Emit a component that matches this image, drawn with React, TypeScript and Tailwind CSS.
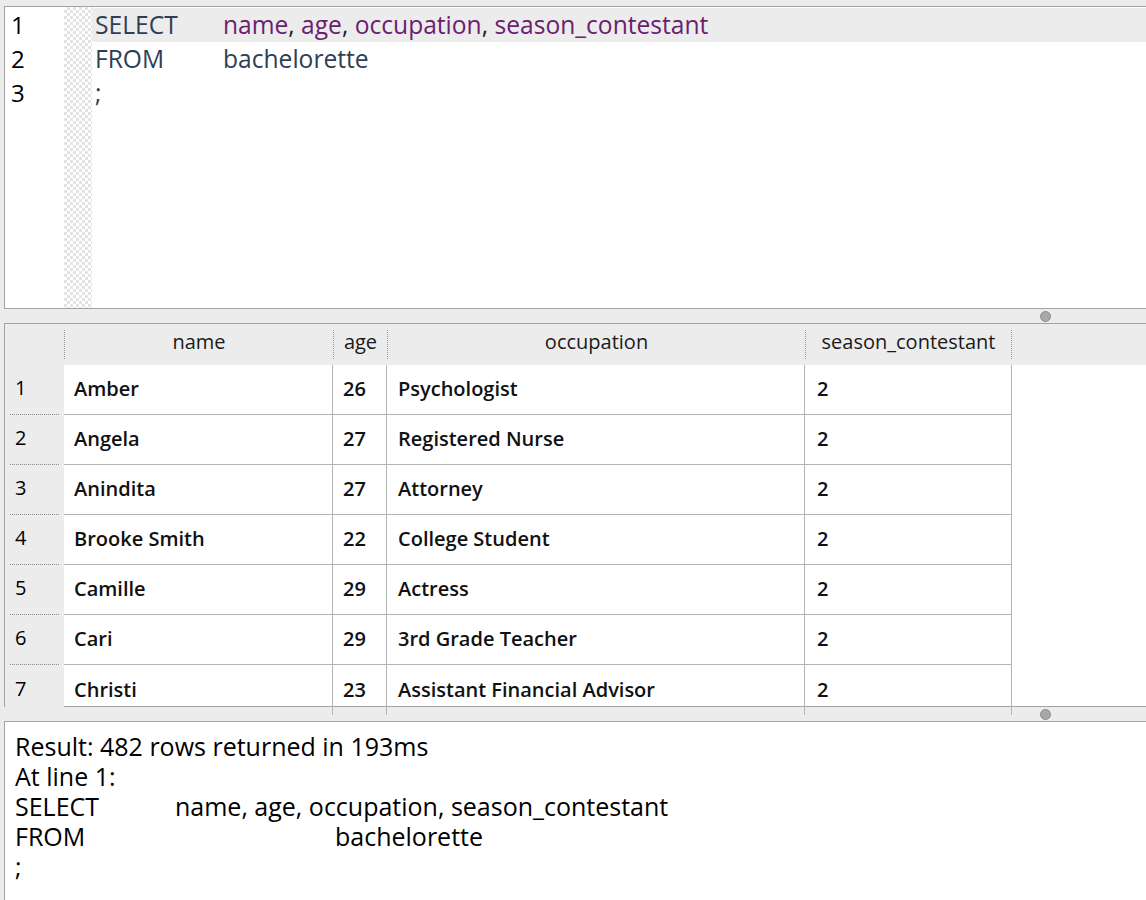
import React from "react";

const rows = [
  ["1", "Amber", "26", "Psychologist", "2"],
  ["2", "Angela", "27", "Registered Nurse", "2"],
  ["3", "Anindita", "27", "Attorney", "2"],
  ["4", "Brooke Smith", "22", "College Student", "2"],
  ["5", "Camille", "29", "Actress", "2"],
  ["6", "Cari", "29", "3rd Grade Teacher", "2"],
  ["7", "Christi", "23", "Assistant Financial Advisor", "2"],
];

const font = { fontFamily: "'Open Sans', 'Noto Sans', sans-serif" };

function Handle() {
  return (
    <div className="w-[11px] h-[11px] rounded-full bg-[#a8a8a8] border border-[#8c8c8c]" />
  );
}

export default function App() {
  return (
    <div
      className="w-[1146px] h-[900px] bg-[#ececec] flex flex-col overflow-hidden text-black"
      style={font}
    >
      <div className="h-[6px] shrink-0" />
      {/* Editor */}
      <div className="ml-[4px] h-[303px] shrink-0 border-t border-l border-b border-[#a3a3a3] bg-white flex">
        <div className="w-[59px] shrink-0 flex flex-col pt-[1px]">
          {["1", "2", "3"].map((n) => (
            <div key={n} className="h-[34px] pl-[6px] flex items-center text-[24px] leading-none font-medium text-black">
              {n}
            </div>
          ))}
        </div>
        <div className="w-[28px] shrink-0 bg-[repeating-conic-gradient(#e4e4e4_0_25%,#ffffff_0_50%)] bg-size-[6px_6px]" />
        <div className="flex-1 flex flex-col pt-[1px] text-[24.6px] leading-none font-medium">
          <div className="h-[34px] bg-[#ececec] flex items-center pl-[3px]">
            <span className="w-[128px] text-[#2e3e55]">SELECT</span>
            <span className="text-[#6b2170]">name</span>
            <span className="text-[#222]">,&nbsp;</span>
            <span className="text-[#6b2170]">age</span>
            <span className="text-[#222]">,&nbsp;</span>
            <span className="text-[#6b2170]">occupation</span>
            <span className="text-[#222]">,&nbsp;</span>
            <span className="text-[#6b2170]">season_contestant</span>
          </div>
          <div className="h-[34px] flex items-center pl-[3px]">
            <span className="w-[128px] text-[#2e3e55]">FROM</span>
            <span className="text-[#2e3e55]">bachelorette</span>
          </div>
          <div className="h-[34px] flex items-center pl-[3px]">
            <span className="text-[#2e3e55]">;</span>
          </div>
        </div>
      </div>
      {/* Splitter */}
      <div className="h-[14px] shrink-0 flex items-center justify-end pr-[95px]">
        <Handle />
      </div>
      {/* Table */}
      <div className="ml-[4px] h-[384px] shrink-0 border-t border-l border-b border-[#a3a3a3] bg-white flex flex-col">
        <div className="h-[41px] shrink-0 bg-[#ececec] flex text-[20px] leading-none text-[#1a1a1a]">
          <div className="w-[59px] shrink-0" />
          <div className="w-[269px] shrink-0 flex items-center justify-center pb-[5px] border-l border-dotted border-[#9a9a9a] my-[6px]">name</div>
          <div className="w-[54px] shrink-0 flex items-center justify-center pb-[5px] border-l border-dotted border-[#9a9a9a] my-[6px]">age</div>
          <div className="w-[418px] shrink-0 flex items-center justify-center pb-[5px] border-l border-dotted border-[#9a9a9a] my-[6px]">occupation</div>
          <div className="w-[207px] shrink-0 flex items-center justify-center pb-[5px] border-l border-r border-dotted border-[#9a9a9a] my-[6px]">season_contestant</div>
          <div className="flex-1" />
        </div>
        <div className="flex-1 flex">
          <div className="w-[59px] shrink-0 bg-[#ececec] flex flex-col">
            {rows.map((r, i) => (
              <div key={r[0]} className="h-[50px] shrink-0 flex flex-col">
                <div className="flex-1 flex items-center pl-[10px] pb-[3px] text-[20px] leading-none font-medium">{r[0]}</div>
                {i < 6 && <div className="mx-[5px] border-b border-dotted border-[#8a8a8a]" />}
              </div>
            ))}
          </div>
          <div className="flex flex-col">
            {rows.map((r, i) => (
              <div
                key={r[0]}
                className={`h-[50px] shrink-0 flex text-[20px] leading-none font-semibold text-[#111] ${i < 6 ? "border-b border-[#b4b4b4]" : ""}`}
              >
                <div className="w-[269px] shrink-0 flex items-center pl-[10px] pb-[1px] border-r border-[#b4b4b4]">{r[1]}</div>
                <div className="w-[54px] shrink-0 flex items-center pl-[10px] pb-[1px] border-r border-[#b4b4b4]">{r[2]}</div>
                <div className="w-[418px] shrink-0 flex items-center pl-[11px] pb-[1px] border-r border-[#b4b4b4]">{r[3]}</div>
                <div className="w-[207px] shrink-0 flex items-center pl-[12px] pb-[1px] border-r border-[#b4b4b4]">{r[4]}</div>
              </div>
            ))}
          </div>
          <div className="flex-1" />
        </div>
      </div>
      {/* Splitter */}
      <div className="h-[14px] shrink-0 flex items-center justify-end pr-[95px]">
        <Handle />
      </div>
      {/* Message */}
      <div className="ml-[4px] flex-1 border-t border-l border-[#a3a3a3] bg-white pl-[10px] pt-[9px] text-[25px] leading-[30px] font-medium text-black">
        <div>Result: 482 rows returned in 193ms</div>
        <div>At line 1:</div>
        <div className="flex">
          <span className="w-[160px]">SELECT</span>
          <span>name, age, occupation, season_contestant</span>
        </div>
        <div className="flex">
          <span className="w-[320px]">FROM</span>
          <span>bachelorette</span>
        </div>
        <div>;</div>
      </div>
    </div>
  );
}
